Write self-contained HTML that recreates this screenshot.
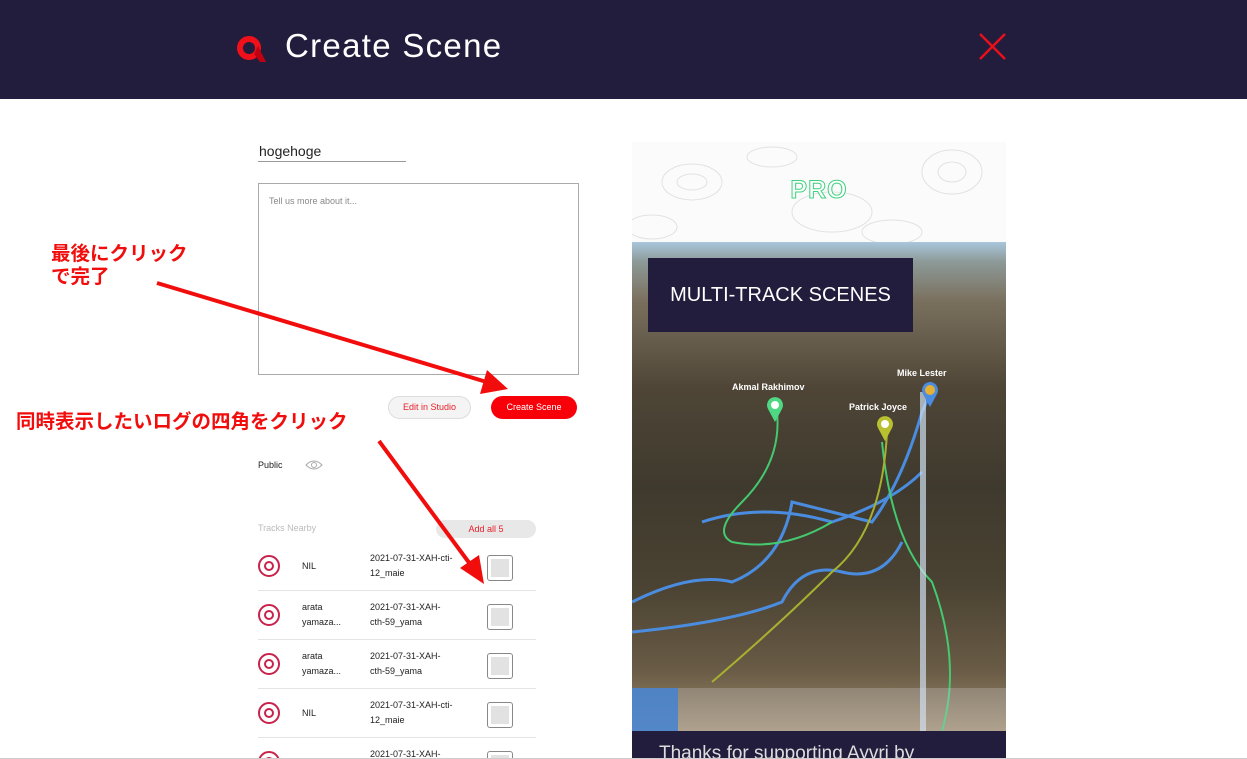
<!DOCTYPE html>
<html><head><meta charset="utf-8"><style>
*{margin:0;padding:0;box-sizing:border-box}
html,body{width:1247px;height:759px;overflow:hidden}
body{background:#fff;font-family:"Liberation Sans","Noto Sans CJK JP",sans-serif;position:relative}
.a{position:absolute}
.hdr{left:0;top:0;width:1247px;height:99px;background:#221c3d}
.jp{color:#f20d0d;font-weight:bold;font-size:19.5px;font-family:"Liberation Sans","Noto Sans CJK JP",sans-serif}
.row{left:258px;width:278px;height:49px;border-bottom:1px solid #e4e4e4}
.ic{width:22px;height:22px;border-radius:50%;border:2px solid #c8234a}
.ic:after{content:"";position:absolute;left:4px;top:4px;width:6px;height:6px;border:2.5px solid #c8234a;border-radius:50%}
.nm{font-size:9px;color:#222;line-height:15px}
.cb{width:26px;height:26px;border:1px solid #888;border-radius:3px;background:#fff}
.cb:after{content:"";position:absolute;left:3px;top:3px;width:18px;height:18px;background:#e2e2e2}
</style></head><body>
<div class="a hdr"></div>
<svg class="a" style="left:236px;top:34px" width="32" height="30" viewBox="0 0 32 30"><circle cx="13" cy="14" r="9" fill="none" stroke="#f0101a" stroke-width="6"/><path d="M18 20 L24 28 L30 28 L22 12Z" fill="#c00010"/></svg>
<div class="a" style="left:285px;top:27px;color:#fff;font-size:33px;letter-spacing:1.3px">Create Scene</div>
<svg class="a" style="left:979px;top:33px" width="27" height="27"><path d="M1 1L26 26M26 1L1 26" stroke="#e8101a" stroke-width="2.5"/></svg>

<div class="a" style="left:259px;top:143px;font-size:14px;color:#222">hogehoge</div>
<div class="a" style="left:258px;top:161px;width:148px;height:1px;background:#999"></div>
<div class="a" style="left:258px;top:183px;width:321px;height:192px;border:1px solid #aaa"></div>
<div class="a" style="left:269px;top:196px;font-size:9px;color:#888">Tell us more about it...</div>
<div class="a" style="left:388px;top:396px;width:83px;height:23px;border:1px solid #ddd;border-radius:12px;background:#f4f4f4;color:#e8202a;font-size:9px;text-align:center;line-height:21px">Edit in Studio</div>
<div class="a" style="left:491px;top:396px;width:86px;height:23px;border-radius:12px;background:#f7000a;color:#fff;font-size:9px;text-align:center;line-height:23px">Create Scene</div>
<div class="a" style="left:258px;top:460px;font-size:9px;color:#222">Public</div>
<svg class="a" style="left:305px;top:459px" width="18" height="12"><path d="M1 6Q9 -2 17 6Q9 14 1 6Z" fill="none" stroke="#aaa"/><circle cx="9" cy="6" r="2.5" fill="none" stroke="#aaa"/></svg>
<div class="a" style="left:258px;top:523px;font-size:9px;color:#bbb">Tracks Nearby</div>
<div class="a" style="left:436px;top:520px;width:100px;height:18px;border-radius:9px;background:#e8e8e8;color:#e8202a;font-size:9px;text-align:center;line-height:18px">Add all 5</div>

<div class="a row" style="top:542px"></div>
<div class="a row" style="top:591px"></div>
<div class="a row" style="top:640px"></div>
<div class="a row" style="top:689px"></div>
<div class="a ic" style="left:258px;top:555px"></div><div class="a nm" style="left:302px;top:559px">NIL</div><div class="a nm" style="left:370px;top:551px">2021-07-31-XAH-cti-<br>12_maie</div><div class="a cb" style="left:487px;top:555px"></div>
<div class="a ic" style="left:258px;top:604px"></div><div class="a nm" style="left:302px;top:600px">arata<br>yamaza...</div><div class="a nm" style="left:370px;top:600px">2021-07-31-XAH-<br>cth-59_yama</div><div class="a cb" style="left:487px;top:604px"></div>
<div class="a ic" style="left:258px;top:653px"></div><div class="a nm" style="left:302px;top:649px">arata<br>yamaza...</div><div class="a nm" style="left:370px;top:649px">2021-07-31-XAH-<br>cth-59_yama</div><div class="a cb" style="left:487px;top:653px"></div>
<div class="a ic" style="left:258px;top:702px"></div><div class="a nm" style="left:302px;top:706px">NIL</div><div class="a nm" style="left:370px;top:698px">2021-07-31-XAH-cti-<br>12_maie</div><div class="a cb" style="left:487px;top:702px"></div>
<div class="a ic" style="left:258px;top:751px"></div><div class="a nm" style="left:370px;top:747px">2021-07-31-XAH-</div><div class="a cb" style="left:487px;top:751px"></div>

<div class="a" style="left:632px;top:142px;width:374px;height:100px;background:#fbfbfb"></div>
<svg class="a" style="left:632px;top:142px" width="374" height="100"><g fill="none" stroke="#e2e2e2"><ellipse cx="60" cy="40" rx="30" ry="18"/><ellipse cx="60" cy="40" rx="15" ry="8"/><ellipse cx="200" cy="70" rx="40" ry="20"/><ellipse cx="320" cy="30" rx="30" ry="22"/><ellipse cx="320" cy="30" rx="14" ry="10"/><ellipse cx="140" cy="15" rx="25" ry="10"/><ellipse cx="260" cy="90" rx="30" ry="12"/><ellipse cx="20" cy="85" rx="25" ry="12"/></g></svg>
<div class="a" style="left:632px;top:176px;width:374px;text-align:center;font-size:25px;font-weight:bold;color:#fff;-webkit-text-stroke:1px #3ed17f;letter-spacing:1px">PRO</div>
<div class="a" style="left:632px;top:242px;width:374px;height:489px;background:linear-gradient(180deg,#a9c6dc 0%,#8d9a98 4%,#7a705e 12%,#4e4536 30%,#3f3a2e 50%,#4a4232 70%,#6a5c46 88%,#a08e70 100%)"></div>
<svg class="a" style="left:632px;top:242px" width="374" height="489"><g fill="none" stroke-width="3"><path d="M0 360Q60 330 100 340Q150 320 160 260Q200 270 240 280Q270 240 290 170Q300 150 298 140" stroke="#4a8de0"/><path d="M0 390Q100 380 150 360Q170 320 210 330Q250 340 270 300" stroke="#4a8de0"/><path d="M70 280Q130 260 200 280Q260 260 290 230" stroke="#4a8de0"/></g><g fill="none" stroke-width="2"><path d="M145 170Q150 220 110 260Q80 290 100 300Q150 310 200 280" stroke="#45c870"/><path d="M250 200Q260 300 300 340Q330 420 310 489" stroke="#45c870"/><path d="M255 190Q250 290 200 330Q150 380 80 440" stroke="#a8b030"/></g><rect x="288" y="150" width="6" height="339" fill="#cfe0f0" opacity=".7"/></svg>
<svg class="a" style="left:765px;top:395px" width="20" height="28"><path d="M10 27L3 14A8 8 0 1 1 17 14Z" fill="#4ed884"/><circle cx="10" cy="10" r="4" fill="#fff"/></svg>
<svg class="a" style="left:875px;top:414px" width="20" height="28"><path d="M10 27L3 14A8 8 0 1 1 17 14Z" fill="#b8c030"/><circle cx="10" cy="10" r="4" fill="#fff"/></svg>
<svg class="a" style="left:920px;top:380px" width="20" height="28"><path d="M10 27L3 14A8 8 0 1 1 17 14Z" fill="#4a8de0"/><circle cx="10" cy="10" r="5" fill="#e8b030"/></svg>
<div class="a" style="left:732px;top:382px;font-size:9px;font-weight:bold;color:#fff">Akmal Rakhimov</div>
<div class="a" style="left:849px;top:402px;font-size:9px;font-weight:bold;color:#fff">Patrick Joyce</div>
<div class="a" style="left:897px;top:368px;font-size:9px;font-weight:bold;color:#fff">Mike Lester</div>
<div class="a" style="left:632px;top:688px;width:46px;height:43px;background:#4a86d0;opacity:.9"></div>
<div class="a" style="left:678px;top:688px;width:328px;height:43px;background:rgba(220,220,230,.25)"></div>
<div class="a" style="left:648px;top:258px;width:265px;height:74px;background:#221c3d;color:#fff;font-size:20px;line-height:74px;text-align:center">MULTI-TRACK SCENES</div>
<div class="a" style="left:632px;top:731px;width:374px;height:28px;background:#221c3d;overflow:hidden"><div style="position:absolute;left:27px;top:12px;color:#ddd;font-size:19px;white-space:nowrap">Thanks for supporting Ayvri by</div></div>
<div class="a" style="left:0;top:758px;width:1247px;height:1px;background:#ccc"></div>

<div class="a jp" style="left:51px;top:243px;line-height:23px">最後にクリック<br>で完了</div>
<div class="a jp" style="left:16px;top:405px">同時表示したいログの四角をクリック</div>
<svg class="a" style="left:0;top:0" width="1247" height="759"><g stroke="#f20d0d" stroke-width="4" fill="#f20d0d"><line x1="157" y1="283" x2="490" y2="383"/><path d="M508 389L480 394L487 370Z" stroke="none"/><line x1="379" y1="441" x2="473" y2="568"/><path d="M484 584L460 568L479 555Z" stroke="none"/></g></svg>
</body></html>
